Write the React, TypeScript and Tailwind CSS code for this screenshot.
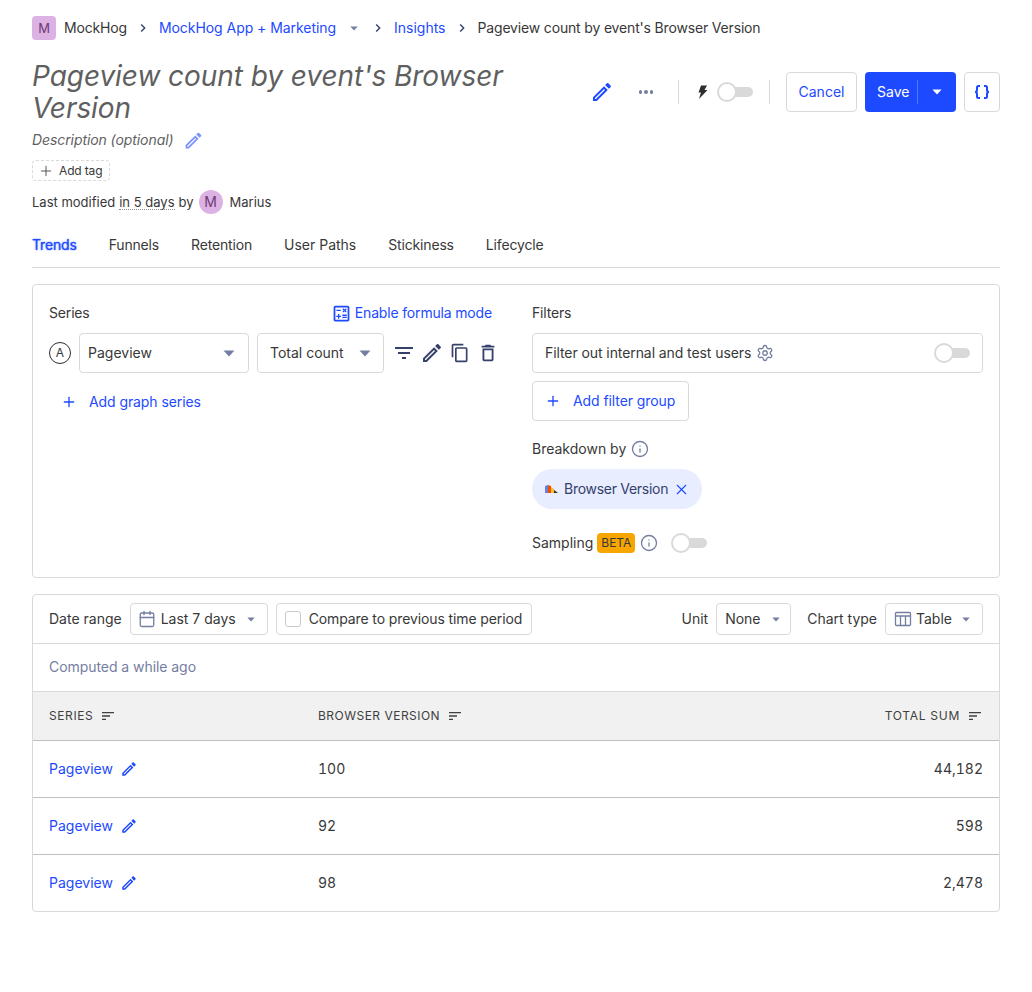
import React from 'react';
import { Calendar, Info, Plus, Settings, X } from 'lucide-react';

const edit = 'M3 17.25V21h3.75L17.81 9.94l-3.75-3.75L3 17.25zM5.92 19H5v-.92l9.06-9.06.92.92L5.92 19zM20.71 5.63l-2.34-2.34c-.2-.2-.45-.29-.71-.29s-.51.09-.7.29l-1.83 1.83 3.75 3.75 1.83-1.83c.39-.39.39-1.02 0-1.41z';
const filter = 'M10 18h4v-2h-4v2zM3 6v2h18V6H3zm3 7h12v-2H6v2z';
const copy = 'M16 1H4c-1.1 0-2 .9-2 2v14h2V3h12V1zm3 4H8c-1.1 0-2 .9-2 2v14c0 1.1.9 2 2 2h11c1.1 0 2-.9 2-2V7c0-1.1-.9-2-2-2zm0 16H8V7h11v14z';
const trash = 'M6 19c0 1.1.9 2 2 2h8c1.1 0 2-.9 2-2V7H6v12zM8 9h8v10H8V9zm7.5-5l-1-1h-5l-1 1H5v2h14V4h-3.5z';
const sort = 'M3 18h6v-2H3v2zM3 6v2h18V6H3zm0 7h12v-2H3v2z';
const calc = 'M19 3H5c-1.1 0-2 .9-2 2v14c0 1.1.9 2 2 2h14c1.1 0 2-.9 2-2V5c0-1.100-.9-2-2-2zm0 16H5V5h14v14zM6.25 7.72h5v1.500h-5zM13 15.750h5v1.500h-5zM13 13.250h5v1.500h-5zM8 18h1.500v-2h2v-1.500h-2v-2H8v2H6V16h2zM14.090 10.950l1.410-1.410 1.410 1.410 1.060-1.060-1.410-1.420 1.410-1.410L16.960 6 15.500 7.410 14.090 6l-1.060 1.060 1.410 1.410-1.410 1.420z';

const Mat: React.FC<{ d: string; className?: string }> = ({ d, className }) => (
  <svg viewBox="0 0 24 24" fill="currentColor" fillRule="evenodd" className={`shrink-0 ${className}`}>
    <path d={d} />
  </svg>
);

const Caret: React.FC<{ w?: number; className?: string }> = ({ w = 8, className = 'text-[#747ea1]' }) => (
  <svg width={w} height={w / 2 + 1} viewBox="0 0 12 7" fill="currentColor" className={`shrink-0 ${className}`}>
    <path d="M0.5 0.5h11L6 6.5z" />
  </svg>
);

const Chevron = () => (
  <span className="w-8 flex justify-center">
    <svg width="6" height="10" viewBox="0 0 6 10" fill="none" stroke="#35416b" strokeWidth="1.4">
      <path d="M1.2 1.5L4.7 5 1.2 8.5" />
    </svg>
  </span>
);

const Toggle = () => (
  <span className="relative block w-9 h-5 shrink-0">
    <span className="absolute left-2 right-0 top-[5px] h-2.5 rounded-full bg-[#d9d9d9]" />
    <span className="absolute left-0 top-0 w-5 h-5 rounded-full bg-white border-2 border-[#d9d9d9]" />
  </span>
);

const SortHead: React.FC<{ label: string; className?: string }> = ({ label, className = 'tracking-[0.05em]' }) => (
  <span className={`flex items-center gap-[7px] text-xs font-normal text-[#404040] ${className}`}>
    {label}
    <Mat d={sort} className="w-4 h-4 text-[#404040]" />
  </span>
);

const rows = [
  { version: '100', sum: '44,182' },
  { version: '92', sum: '598' },
  { version: '98', sum: '2,478' },
];

export default function App() {
  return (
    <div className="px-8 pb-20 bg-white text-sm text-[#383838] [font-family:Inter,sans-serif]">
      {/* Breadcrumbs */}
      <div className="flex items-center pt-4 h-10">
        <span className="w-6 h-6 rounded bg-[#dcb1e3] text-[#6d3a75] text-[13px] flex items-center justify-center mr-2">M</span>
        <span className="tracking-[-0.012em]">MockHog</span>
        <Chevron />
        <span className="text-[#1d4aff] tracking-[-0.004em]">MockHog App + Marketing</span>
        <span className="ml-[14px] mr-1"><Caret /></span>
        <Chevron />
        <span className="text-[#1d4aff]">Insights</span>
        <Chevron />
        <span className="tracking-[-0.012em]">Pageview count by event's Browser Version</span>
      </div>

      {/* Title */}
      <div className="flex items-center justify-between mt-5">
        <h1 className="w-[540px] text-[28px] leading-8 italic font-normal tracking-[-0.002em] text-[#5f5f5f]">
          Pageview count by event's Browser Version
        </h1>
        <div className="flex items-center">
          <Mat d={edit} className="w-6 h-6 text-[#1d4aff]" />
          <span className="w-[44px] ml-[10px] flex justify-center gap-[2px]">
            <i className="w-[3.5px] h-[3.5px] rounded-full bg-[#747ea1]" />
            <i className="w-[3.5px] h-[3.5px] rounded-full bg-[#747ea1]" />
            <i className="w-[3.5px] h-[3.5px] rounded-full bg-[#747ea1]" />
          </span>
          <span className="w-px h-6 bg-[#d9d9d9] ml-[10px]" />
          <svg width="12" height="16" viewBox="0 0 12 16" fill="#2d2d2d" className="ml-[17px] mr-[9px]">
            <path d="M5 1.500h6L8.500 6H11.500L3 15l2-6.500H2.500z" />
          </svg>
          <Toggle />
          <span className="w-px h-6 bg-[#d9d9d9] ml-4 mr-4" />
          <span className="h-10 w-[71px] flex items-center justify-center rounded border border-[#d9d9d9] text-[#1d4aff]">Cancel</span>
          <span className="h-10 w-[91px] ml-2 flex items-center rounded bg-[#1d4aff] text-white">
            <span className="w-[52px] pl-3">Save</span>
            <span className="w-px h-6 bg-white/25" />
            <span className="flex-1 flex justify-center"><Caret w={10} className="text-white" /></span>
          </span>
          <span className="h-10 w-9 ml-2 flex items-center justify-center rounded border border-[#d9d9d9] text-[#1d4aff]">
            <svg width="16" height="14" viewBox="0 0 16 14" fill="none" stroke="currentColor" strokeWidth="2">
              <path d="M6 1H4.500C3.500 1 3 1.500 3 2.500V5C3 6 2 7 1 7c1 0 2 1 2 2v2.500c0 1 .5 1.500 1.500 1.500H6M10 1h1.500c1 0 1.500.5 1.500 1.500V5c0 1 1 2 2 2-1 0-2 1-2 2v2.500c0 1-.5 1.500-1.500 1.500H10" />
            </svg>
          </span>
        </div>
      </div>

      <div className="flex items-center h-6 mt-1">
        <span className="italic text-[#5f5f5f] tracking-[-0.006em]">Description (optional)</span>
        <Mat d={edit} className="w-[21px] h-[21px] ml-[10px] text-[#7b93ff]" />
      </div>

      <div className="mt-2 w-[78px] h-[21px] flex items-center rounded border border-dashed border-[#d9d9d9] text-xs tracking-[-0.012em]">
        <Plus size={16} strokeWidth={1.25} className="ml-[5px] mr-[5px]" />
        Add tag
      </div>

      <div className="flex items-center mt-[9px] h-6 text-[13px]">
        Last modified
        <span className="mx-1 border-b border-dotted border-[#8a8a8a] leading-[14px]">in 5 days</span>
        by
        <span className="w-6 h-6 rounded-full bg-[#dcb1e3] text-[#6d3a75] text-sm flex items-center justify-center ml-[5px] mr-[7px]">M</span>
        Marius
      </div>

      {/* Tabs */}
      <div className="flex items-center gap-8 h-[45px] mt-[9px] border-b border-[#d9d9d9]">
        <span className="text-[#1d4aff] tracking-[-0.012em] [text-shadow:0_0_1.5px_#1d4aff]">Trends</span>
        <span className="tracking-[-0.012em]">Funnels</span>
        <span className="tracking-[-0.012em]">Retention</span>
        <span>User Paths</span>
        <span className="tracking-[-0.012em]">Stickiness</span>
        <span className="tracking-[-0.012em]">Lifecycle</span>
      </div>

      {/* Query card */}
      <div className="mt-4 h-[294px] rounded border border-[#d9d9d9] px-4 pt-4 flex">
        <div className="w-[483px]">
          <div className="flex items-center justify-between w-[443px] h-6">
            <span className="tracking-[-0.012em]">Series</span>
            <span className="flex items-center text-[#1d4aff] tracking-[-0.012em]">
              <Mat d={calc} className="w-[21px] h-[21px] mr-[3px]" />
              Enable formula mode
            </span>
          </div>
          <div className="flex items-center mt-2">
            <span className="w-[22px] h-[22px] rounded-full border-[1.5px] border-[#2d2d2d] flex items-center justify-center text-xs mr-2">A</span>
            <span className="w-[170px] h-10 px-2 flex items-center justify-between rounded border border-[#d9d9d9]">
              Pageview
              <span className="mr-[5px]"><Caret w={12} /></span>
            </span>
            <span className="w-[127px] h-10 ml-2 pl-3 pr-3 flex items-center justify-between rounded border border-[#d9d9d9]">
              Total count
              <Caret w={12} />
            </span>
            <span className="flex items-center ml-2 text-[#35416b]">
              <Mat d={filter} className="w-6 h-6" />
              <Mat d={edit} className="w-6 h-6 ml-1" />
              <Mat d={copy} className="w-5 h-5 ml-[6px]" />
              <Mat d={trash} className="w-[22px] h-[22px] ml-[7px]" />
            </span>
          </div>
          <div className="flex items-center h-10 mt-[9px] text-[#1d4aff] tracking-[-0.006em]">
            <Plus size={16} strokeWidth={2} className="ml-3 mr-3" />
            Add graph series
          </div>
        </div>

        <div className="flex-1">
          <div className="h-6 flex items-center tracking-[-0.012em]">Filters</div>
          <div className="h-10 mt-2 pl-3 pr-3 flex items-center rounded border border-[#d9d9d9]">
            <span className="tracking-[-0.006em]">Filter out internal and test users</span>
            <Settings size={18} strokeWidth={1.75} className="ml-[5px] text-[#747ea1]" />
            <span className="ml-auto"><Toggle /></span>
          </div>
          <div className="h-10 w-[157px] mt-2 flex items-center rounded border border-[#d9d9d9] text-[#1d4aff] tracking-[-0.006em]">
            <Plus size={16} strokeWidth={2} className="ml-3 mr-3" />
            Add filter group
          </div>
          <div className="flex items-center h-6 mt-4">
            Breakdown by
            <Info size={18} strokeWidth={1.75} className="ml-[5px] text-[#747ea1]" />
          </div>
          <div className="mt-2 w-[170px] h-10 rounded-full bg-[#e8edff] flex items-center pl-[13px] text-[#35416b] tracking-[-0.02em]">
            <svg width="14" height="10" viewBox="0 0 14 10" className="mr-[5px]">
              <path d="M0 2l3-1v8H0z" fill="#6b7fd6" />
              <path d="M3 1l3 1v7H3z" fill="#f54e00" />
              <path d="M6 3l3 2v4H6z" fill="#f9bd2b" />
              <path d="M9 6l4 3H9z" fill="#2d2d2d" />
            </svg>
            Browser Version
            <X size={17} strokeWidth={1.5} className="ml-[5px] text-[#1d4aff]" />
          </div>
          <div className="flex items-center h-6 mt-[22px]">
            Sampling
            <span className="ml-1 h-5 w-[38px] rounded bg-[#f7a501] text-xs flex items-center justify-center">BETA</span>
            <Info size={18} strokeWidth={1.75} className="ml-[5px] mr-[13px] text-[#747ea1]" />
            <Toggle />
          </div>
        </div>
      </div>

      {/* Results card */}
      <div className="mt-4 rounded border border-[#d9d9d9]">
        <div className="h-[49px] px-4 flex items-center border-b border-[#d9d9d9]">
          <span>Date range</span>
          <span className="ml-2 h-8 w-[138px] pl-[7px] pr-2 flex items-center rounded border border-[#d9d9d9]">
            <Calendar size={18} strokeWidth={1.75} className="text-[#747ea1] mr-[5px]" />
            Last 7 days
            <span className="ml-auto mr-1"><Caret /></span>
          </span>
          <span className="ml-2 h-8 w-[256px] px-2 flex items-center rounded border border-[#d9d9d9] whitespace-nowrap">
            <span className="w-4 h-4 shrink-0 rounded-[3px] border border-[#c9c9c9] mr-2" />
            <span className="tracking-[-0.008em]">Compare to previous time period</span>
          </span>
          <span className="ml-auto">Unit</span>
          <span className="ml-2 h-8 w-[75px] px-2 flex items-center justify-between rounded border border-[#d9d9d9]">
            None
            <span className="mr-[2px]"><Caret /></span>
          </span>
          <span className="ml-4">Chart type</span>
          <span className="ml-2 h-8 w-[98px] px-2 flex items-center rounded border border-[#d9d9d9]">
            <svg width="18" height="18" viewBox="0 0 18 18" fill="none" stroke="#747ea1" strokeWidth="1.300" className="mr-1">
              <rect x="1.500" y="2.500" width="15" height="13" rx="1" />
              <path d="M1.500 6h15M6.500 6v9.500M11.500 6v9.500" />
            </svg>
            Table
            <span className="ml-auto mr-1"><Caret /></span>
          </span>
        </div>
        <div className="h-12 px-4 pb-px flex items-center text-[#747ea1] tracking-[-0.004em] border-b border-[#d9d9d9]">Computed a while ago</div>
        <div className="grid grid-cols-[269px_1fr_auto] px-4 h-[49px] items-center bg-[#f1f1f1] border-b border-[#bfbfbf]">
          <SortHead label="SERIES" />
          <SortHead label="BROWSER VERSION" className="tracking-[0.04em]" />
          <SortHead label="TOTAL SUM" className="tracking-[0.06em]" />
        </div>
        {rows.map((row, i) => (
          <div
            key={row.version}
            className={`grid grid-cols-[269px_1fr_auto] px-4 items-center ${i < rows.length - 1 ? 'h-[57px] border-b border-[#bfbfbf]' : 'h-14'}`}
          >
            <span className="flex items-center text-[#1d4aff]">
              Pageview
              <Mat d={edit} className="w-[18px] h-[18px] ml-[7px]" />
            </span>
            <span className="tabular-nums">{row.version}</span>
            <span className="tabular-nums">{row.sum}</span>
          </div>
        ))}
      </div>
    </div>
  );
}
